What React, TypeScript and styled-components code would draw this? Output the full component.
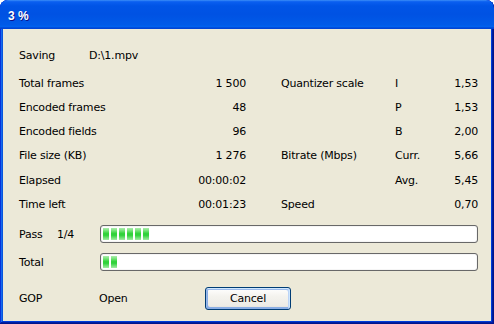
import React from "react";
import styled, { createGlobalStyle } from "styled-components";

const Global = createGlobalStyle`
  html, body { margin: 0; padding: 0; background: #ffffff; overflow: hidden; }
  * { box-sizing: border-box; }
`;

const Window = styled.div`
  width: 494px;
  height: 324px;
  display: flex;
  flex-direction: column;
  border-radius: 8px 8px 0 0;
  overflow: hidden;
  background: #0831d9;
  padding: 0 3px 3px 3px;
  box-shadow: inset -1px -1px #00138c, inset 1px 1px #0831d9,
    inset -2px -2px #001ea0, inset 2px 2px #166aee, inset -3px -3px #003bda,
    inset 3px 3px #0855dd;
  font-family: "DejaVu Sans", "Liberation Sans", sans-serif;
  font-size: 11px;
  letter-spacing: -0.2px;
  color: #000;
`;

const TitleBar = styled.div`
  height: 29px;
  margin: 0 -3px;
  display: flex;
  align-items: center;
  padding: 3px 0 0 8px;
  border-radius: 8px 8px 0 0;
  background: linear-gradient(
    180deg,
    #3c8ef7 0%,
    #0a5ff0 6%,
    #0054e6 20%,
    #0052e3 50%,
    #005ae8 85%,
    #0061ee 92%,
    #0047d8 96%,
    #0042d2 100%
  );
`;

const TitleText = styled.span`
  font-family: "Liberation Sans", "DejaVu Sans", sans-serif;
  font-weight: bold;
  font-size: 12px;
  color: #fff;
  letter-spacing: 0;
  text-shadow: 1px 1px #0f1089;
`;

const Body = styled.div`
  flex: 1;
  background: #ece9d8;
  padding: 14px 13px 0 16px;
  display: flex;
  flex-direction: column;
`;

const SavingRow = styled.div`
  height: 24px;
  display: grid;
  grid-template-columns: 70px 1fr;
  align-items: center;
`;

const StatsGrid = styled.div`
  margin-top: 4px;
  display: grid;
  grid-template-columns: 160px 67px 149px 40px 43px;
  grid-template-rows: 24px 24px 24px 25px 24px 24px;
  align-items: center;
`;

const Cell = styled.div<{ $align?: "left" | "right"; $pad?: number }>`
  text-align: ${(p) => p.$align ?? "left"};
  padding-left: ${(p) => p.$pad ?? 0}px;
  white-space: nowrap;
`;

const ProgressGrid = styled.div`
  margin-top: 9px;
  display: grid;
  grid-template-columns: 38px 43px 1fr;
  grid-template-rows: 18px 18px;
  row-gap: 10px;
  align-items: center;
`;

const Bar = styled.div`
  height: 18px;
  border: 1px solid #686868;
  border-radius: 3px;
  background: #fff;
  box-shadow: inset 0 0 1px 0 #9a9a9a;
  padding: 2px 2px;
  display: flex;
  gap: 2px;
  align-items: stretch;
`;

const Chunk = styled.div`
  width: 6px;
  background: linear-gradient(
    180deg,
    #acedad 0%,
    #7be47d 20%,
    #33d33b 45%,
    #2fd13a 60%,
    #6ee173 82%,
    #a5eaa5 100%
  );
`;

const Footer = styled.div`
  margin-top: 16px;
  display: grid;
  grid-template-columns: 80px 106px 86px;
  align-items: center;
  height: 23px;
`;

const Button = styled.button`
  width: 86px;
  height: 23px;
  border: 1px solid #003c74;
  border-radius: 3px;
  font-family: "DejaVu Sans", "Liberation Sans", sans-serif;
  font-size: 11px;
  letter-spacing: -0.2px;
  color: #000;
  padding: 0;
  background: linear-gradient(180deg, #ffffff 0%, #f4f3ee 40%, #ecebe6 86%, #d6d0c5 100%);
  box-shadow: inset -1px 1px #cee7ff, inset 1px 2px #98b8ea,
    inset -2px 2px #bcd4f6, inset 1px -1px #89ade4, inset 2px -2px #89ade4;
`;

const Spacer = styled.div``;

type Row = [string, string, string, string, string];

const rows: Row[] = [
  ["Total frames", "1 500", "Quantizer scale", "I", "1,53"],
  ["Encoded frames", "48", "", "P", "1,53"],
  ["Encoded fields", "96", "", "B", "2,00"],
  ["File size (KB)", "1 276", "Bitrate (Mbps)", "Curr.", "5,66"],
  ["Elapsed", "00:00:02", "", "Avg.", "5,45"],
  ["Time left", "00:01:23", "Speed", "", "0,70"],
];

export default function App() {
  return (
    <>
      <Global />
      <Window>
        <TitleBar>
          <TitleText>3 %</TitleText>
        </TitleBar>
        <Body>
          <SavingRow>
            <Cell>Saving</Cell>
            <Cell>D:\1.mpv</Cell>
          </SavingRow>
          <StatsGrid>
            {rows.map((r, i) => (
              <React.Fragment key={i}>
                <Cell>{r[0]}</Cell>
                <Cell $align="right">{r[1]}</Cell>
                <Cell $pad={35}>{r[2]}</Cell>
                <Cell>{r[3]}</Cell>
                <Cell $align="right">{r[4]}</Cell>
              </React.Fragment>
            ))}
          </StatsGrid>
          <ProgressGrid>
            <Cell>Pass</Cell>
            <Cell>1/4</Cell>
            <Bar>
              {Array.from({ length: 6 }).map((_, i) => (
                <Chunk key={i} />
              ))}
            </Bar>
            <Cell>Total</Cell>
            <Spacer />
            <Bar>
              {Array.from({ length: 2 }).map((_, i) => (
                <Chunk key={i} />
              ))}
            </Bar>
          </ProgressGrid>
          <Footer>
            <Cell>GOP</Cell>
            <Cell>Open</Cell>
            <Button>Cancel</Button>
          </Footer>
        </Body>
      </Window>
    </>
  );
}
